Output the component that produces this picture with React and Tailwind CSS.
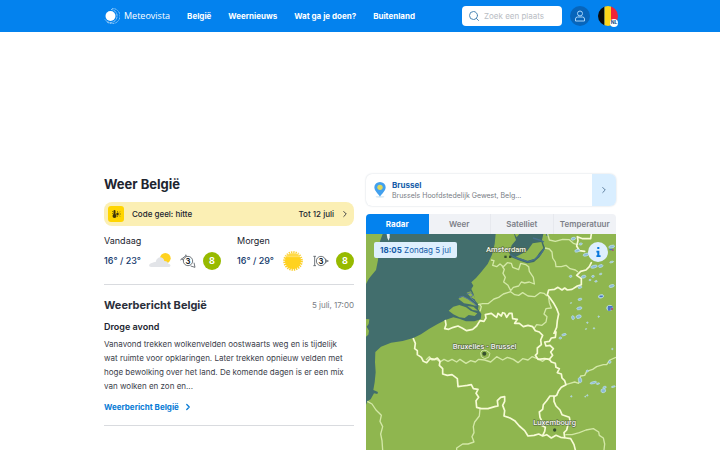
import React from "react";
import { ChevronRight, Search } from "lucide-react";

const navLinks = ["België", "Weernieuws", "Wat ga je doen?", "Buitenland"];
const tabs = ["Radar", "Weer", "Satelliet", "Temperatuur"];

const forecast = [
  { day: "Vandaag", temp: "16° / 23°", icon: "cloud", wind: 3, score: 8 },
  { day: "Morgen", temp: "16° / 29°", icon: "sun", wind: 3, score: 8 },
];

const Logo = () => (
  <svg viewBox="0 0 32 32" className="size-4" aria-hidden="true">
    <circle cx="13" cy="16" r="10" fill="#fff" />
    <path d="M14 3a13 13 0 0 1 4 25A13 13 0 0 1 2 23" fill="none" stroke="#d5ecfe" strokeWidth="2" strokeDasharray="1.8 1.2" />
    <path d="M16 1a15 15 0 0 1 2 30A15 15 0 0 1 5 27" fill="none" stroke="#b5dcfc" strokeWidth="2" strokeDasharray="1.8 1.4" />
  </svg>
);

const UserIcon = () => (
  <svg viewBox="0 0 24 24" className="size-3" fill="none" stroke="#a9d5fa" strokeWidth="2" aria-hidden="true">
    <circle cx="12" cy="7" r="5" />
    <path d="M7 14h10a4 4 0 0 1 4 4v4H3v-4a4 4 0 0 1 4-4z" strokeLinejoin="round" />
  </svg>
);

const BelgianFlag = () => (
  <svg viewBox="0 0 40 40" className="size-5" aria-hidden="true">
    <clipPath id="flag">
      <circle cx="20" cy="20" r="20" />
    </clipPath>
    <g clipPath="url(#flag)">
      <path d="M0 0h13v40H0z" fill="#0a0a0a" />
      <path d="M13 0h13v40H13z" fill="#fdd51a" />
      <path d="M26 0h14v40H26z" fill="#ef2437" />
    </g>
  </svg>
);

const HeatIcon = () => (
  <svg viewBox="0 0 32 32" className="size-4" aria-hidden="true">
    <rect width="32" height="32" rx="6" fill="#ffd500" />
    <path d="M13 10v8" stroke="#3d330a" strokeWidth="4" strokeLinecap="round" />
    <circle cx="13" cy="20" r="4" fill="#3d330a" />
    <circle cx="19" cy="16" r="2.5" fill="#3d330a" />
    <path d="M19 10v3M19 19v3M23 16h3M22 13l2-2M22 19l2 2M8 11h2M8 15h2" stroke="#6f5c0c" strokeWidth="1.5" />
  </svg>
);

const CloudIcon = () => (
  <svg viewBox="0 0 72 48" className="h-4 w-6" aria-hidden="true">
    <circle cx="52" cy="16" r="16" fill="#ffd21f" />
    <path d="M10 42C1 42 1 32 12 30c4-3 8-3 11-3C27 9 46 9 49 24c7 0 11 4 12 8 9 1 8 10 1 10z" fill="#e2e4e8" />
  </svg>
);

const SunIcon = () => (
  <svg viewBox="0 0 60 60" className="size-5" aria-hidden="true">
    <circle cx="30" cy="30" r="25" fill="none" stroke="#fbcf2b" strokeWidth="9" strokeDasharray="4 2.54" />
    <circle cx="30" cy="30" r="24" fill="#ffd21f" />
    <path d="M3 7h54M3 12h54M3 17h54" stroke="#fff" strokeWidth="2" opacity=".55" />
  </svg>
);

const WindIcon = ({ day, value }) => (
  <svg viewBox="0 0 48 42" className="h-3.5 w-4" role="img" aria-label={`Wind ${value}`}>
    <g fill="none" stroke="#565b63" strokeWidth="2.5">
      {day === "Vandaag" ? (
        <path d="M1 18L19 4M4 15l8 4M17 2l3 8M32 36l13 4-3-14" />
      ) : (
        <path d="M1 7h8M5 7v28M1 35h8M36 15l8 6-8 6M38 21h9" />
      )}
      <circle cx="24" cy="21" r="14" fill="#fff" />
    </g>
    <text x="24" y="29" textAnchor="middle" className="fill-[#20242c] text-[23px] font-bold">
      {value}
    </text>
  </svg>
);

const PinIcon = () => (
  <svg viewBox="0 0 36 48" className="h-4 w-3 shrink-0" aria-hidden="true">
    <ellipse cx="18" cy="44" rx="13" ry="3" fill="#dcebf5" />
    <path d="M18 44C13 36 1 27 1 16a17 16 0 0 1 34 0c0 11-12 20-17 28z" fill="#42a0ee" />
    <circle cx="18" cy="16" r="8" fill="#ded75a" />
  </svg>
);

const radarEchoes = [
  [622, 14, 7, 4], [634, 50, 8, 4], [644, 30, 5, 3], [660, 62, 9, 4], [737, 38, 9, 4],
  [684, 98, 10, 4], [704, 96, 7, 4], [737, 84, 6, 2], [614, 127, 4, 3], [653, 128, 7, 4],
  [681, 127, 4, 3], [704, 120, 4, 2], [690, 142, 4, 2], [672, 138, 3, 2], [642, 160, 6, 3],
  [737, 156, 8, 4], [705, 187, 8, 5], [642, 196, 6, 3], [731, 222, 9, 8], [640, 223, 8, 4],
  [621, 251, 4, 6], [638, 248, 8, 5], [615, 207, 2, 1], [698, 248, 2, 2], [684, 283, 2, 2],
  [664, 266, 2, 2], [660, 285, 2, 1], [594, 302, 7, 3], [583, 312, 4, 3], [642, 438, 5, 8],
  [664, 411, 3, 3], [682, 446, 10, 3], [696, 449, 5, 2], [712, 470, 7, 6], [742, 458, 6, 2],
  [716, 460, 5, 3], [731, 384, 4, 4], [739, 345, 2, 2], [616, 487, 2, 2], [664, 484, 2, 2],
  [658, 488, 2, 1],
];

const RadarMap = () => (
  <svg viewBox="0 0 750 648" className="block w-full" role="img" aria-label="Radarkaart van België">
    <rect width="750" height="648" fill="#8fb64f" />

    {/* sea */}
    <path
      d="M0 0H389L386 30L378 62L365 90L345 115L330 132L316 145L322 155L316 165L322 178L328 200L338 212L336 225L346 240L344 256L325 262L300 262L280 254L262 250L240 257L215 270L190 284L165 301L142 312L110 321L75 326L45 338L28 354L27 385L29 415L26 445L22 468L36 474L34 480L24 478L14 496L4 502L0 512Z"
      fill="#426e6d"
    />
    <path
      d="M0 0H50L42 22L38 45L36 78L30 108L15 126L8 135L0 150ZM0 255L10 256L8 270L2 278L9 290L7 302L0 308Z"
      fill="#8fb64f"
    />
    <path d="M62 0L64 12L68 20L71 10V0Z" fill="#e7eef3" />

    {/* Zeeland */}
    <g fill="#8fb64f">
      <path d="M248 230L262 218L280 213L300 220L314 230L334 238L326 246L308 243L296 252L280 250L262 241Z" />
      <path d="M277 194L292 187L306 196L324 208L330 216L312 211L294 208Z" />
      <path d="M302 176L314 172L324 186L330 198L314 190Z" />
      <path d="M304 216L322 218L336 230L320 228Z" />
    </g>
    <path
      d="M279 190L290 187L305 194L322 206L332 215M302 180L314 176L322 184L312 190L328 204"
      fill="none"
      stroke="#5877a0"
      strokeWidth="3"
    />

    {/* IJsselmeer and Waddenzee */}
    <path
      d="M444 0L450 18L437 34L430 58L436 70L458 79L484 88L504 84L520 70L532 52L537 42L528 18L532 0Z"
      fill="#3f6a69"
    />
    <path d="M446 0L460 0L452 10ZM450 68L470 58L484 50L500 28L526 24L532 42L520 56L508 74L484 80Z" fill="#8fb64f" />
    <path d="M432 62L450 72L470 78L486 84L506 76L524 60L535 44M501 12L520 18L534 24M540 2L548 6" fill="none" stroke="#46708a" strokeWidth="4" />

    {/* provinces and regions */}
    <g fill="none" stroke="#d3e8a7" strokeWidth="4" strokeLinejoin="round">
      <path d="M375 78L384 80L380 94L392 98L402 90L412 98L424 86L436 88L440 100L458 107L464 88L480 92L488 98L490 112L502 130L505 150L490 144L476 147L466 144L458 156L442 160L434 170L426 154L413 144L418 130L411 118L415 106L408 96" />
      <path d="M336 212L350 209L366 209L384 195L398 190L412 180L434 173L446 182L458 184L470 176L486 186L506 188L522 176L534 178L543 186" />
      <path d="M537 42L550 45L558 54L560 72L568 84L570 98L586 98L600 94L612 104L628 108L636 114" />
      <path d="M545 0L550 18L568 22L590 16L610 17L622 28L634 32" />
      <path d="M548 190L550 206L556 222L540 224L534 240L543 248L540 264L528 274L512 272L504 284" />
      <path d="M342 232L346 218L340 210" />
      <path d="M180 378L190 368L198 378L212 376L222 384L234 376L246 382L258 376L272 384L282 376L300 388L314 380L328 384L338 376L356 378L374 384L392 368L410 378L424 370L442 376L456 386L470 374L486 378L498 368L514 374L530 382L540 374L552 378" />
      <path d="M4 502L18 510L30 528L46 544L42 562L50 578L44 600L48 620L50 648M342 524L340 546L326 564L322 578L324 596L318 608L324 624L306 630L290 630L272 642V648" />
      <path d="M600 452L612 448L626 444L638 448L644 426L656 424L662 412L680 406L692 398L712 392L722 392L732 378L750 370" />
      <path d="M598 602L618 602L640 596L660 588L682 584L698 594L700 604L712 612L716 630L714 648" />
    </g>

    {/* national borders */}
    <g fill="none" stroke="#f7fbd6" strokeWidth="5" strokeLinejoin="round" strokeLinecap="round">
      <path d="M142 314L148 328L146 344L154 350L154 362L166 370L172 382L182 386L192 374L206 376L214 372L222 382L220 394L230 404L230 420L244 424L258 422L274 434L276 458L290 456L304 454L316 452L322 464L336 466L330 478L338 490L330 500L332 520L346 524L366 524L386 518L396 516L394 500L404 490L416 488L416 502L410 514L416 530L414 546L432 552L446 560L460 576L476 590L486 606L504 604L518 600L530 606L542 602L556 612L570 604L584 610L600 612L614 614L624 632L628 648" />
      <path d="M238 260L240 272L236 284L248 286L262 280L276 276L288 282L302 290L320 286L332 276L342 260L354 262L360 252L358 242L376 238L386 246L392 250L396 238L406 246L410 236L416 238L422 250L430 238L438 238L440 254L454 256L446 268L460 268L472 278L486 274L500 278L508 290L520 294L530 304L524 318L526 332L514 342L514 358L508 364L516 376L536 374L550 376L556 384L568 388L570 400L580 404L574 416L586 420L588 432L596 440L600 452L586 460L578 470L572 484L564 488" />
      <path d="M676 0L674 14L650 14L634 8L636 20L632 36L640 50L656 52M676 86L670 98L660 108L644 112L632 124L646 134L646 152L634 156L618 166L604 168L596 162L588 168L576 160L566 166L548 168L544 182L552 192L562 206L572 224L578 240L574 260L572 280L564 298L570 294L568 310L556 312L550 322L536 324L540 336L552 334L562 344L554 354L560 364L550 376" />
      <path d="M564 488L564 502L570 516L582 528L588 542L610 550L612 560L606 572L602 588L594 596L596 610" />
      <path d="M564 486L552 486L542 500L532 512L530 526L520 534L522 550L528 562L526 574L538 580L536 592L530 604" />
    </g>

    <g stroke="#c3e2ef" strokeWidth="2">
      {radarEchoes.map(([x, y, rx, ry]) => (
        <ellipse key={`${x}-${y}`} cx={x} cy={y} rx={rx} ry={ry} fill="#8cbbd4" transform={`rotate(-14 ${x} ${y})`} />
      ))}
    </g>
    <path d="M726 216h14v5h-6v9h-8zM730 44h10v5h-10zM701 185h9v4h-9z" fill="#4b72c4" />
    <path d="M735 222h6v6h-6zM738 46h5v5h-5z" fill="#a8577f" />

    <g fill="#35502d">
      <rect x="415" y="65" width="7" height="7" />
      <rect x="429" y="65" width="7" height="7" />
      <path d="M344 356L350 348L362 350L372 358L368 370L356 374L346 368Z" fill="none" stroke="#d3e8a7" strokeWidth="3" />
      <circle cx="355" cy="359" r="6" />
      <circle cx="566" cy="588" r="5" />
    </g>
    <g
      className="fill-[#f4f6ee] stroke-[#4e5d3c] font-[Roboto,sans-serif] text-[23px] font-medium"
      strokeWidth="3"
      paintOrder="stroke"
      textAnchor="middle"
    >
      <text x="420" y="54">Amsterdam</text>
      <text x="356" y="345">Bruxelles - Brussel</text>
      <text x="566" y="574">Luxembourg</text>
    </g>
  </svg>
);

const Header = () => (
  <header className="bg-[#0382ee] px-4 text-white">
    <div className="mx-auto flex h-8 max-w-[512px] items-center">
      <a href="#" className="flex items-center gap-1 font-['Open_Sans',sans-serif] text-[9px]">
        <Logo />
        Meteovista
      </a>
      <nav className="ml-[17px] flex gap-[17px] text-[8px] font-bold whitespace-nowrap">
        {navLinks.map((link) => (
          <a key={link} href="#">
            {link}
          </a>
        ))}
      </nav>
      <div className="-mr-0.5 ml-auto flex items-center gap-2">
        <label className="flex h-5 w-[100px] items-center gap-1 rounded bg-white px-1.5">
          <Search className="size-3 shrink-0 text-[#4c87b5]" strokeWidth={2} />
          <input
            type="search"
            aria-label="Zoek een plaats"
            placeholder="Zoek een plaats"
            className="w-full min-w-0 text-[8px] text-gray-800 outline-none placeholder:text-[#b9bdc4]"
          />
        </label>
        <button aria-label="Account" className="flex size-5 items-center justify-center rounded-full bg-[#0765bb]">
          <UserIcon />
        </button>
        <button aria-label="Taal" className="relative">
          <BelgianFlag />
          <span className="absolute right-0 -bottom-px flex size-2 items-center justify-center rounded-full bg-white text-[5px] font-bold text-[#164a88]">
            NL
          </span>
        </button>
      </div>
    </div>
  </header>
);

const Forecast = () => (
  <section className="mt-2 grid grid-cols-2 gap-4 border-b border-[#d9dbdf] pb-[11px]">
    {forecast.map(({ day, temp, icon, wind, score }) => (
      <div key={day}>
        <h2 className="text-[9px] leading-3.5">{day}</h2>
        <div className="mt-px flex h-6 items-center justify-between">
          <span className="text-[9px] font-medium whitespace-nowrap text-[#12386b]">{temp}</span>
          <span className="flex w-6 justify-center">{icon === "sun" ? <SunIcon /> : <CloudIcon />}</span>
          <WindIcon day={day} value={wind} />
          <span className="flex size-[18px] items-center justify-center rounded-full bg-[#97ba00] text-[9px] font-bold text-white">
            {score}
          </span>
        </div>
      </div>
    ))}
  </section>
);

const Report = () => (
  <section className="border-b border-[#d9dbdf] pt-3 pb-3">
    <div className="flex items-center justify-between">
      <h2 className="text-[11px] leading-4 font-bold text-[#2b2f3b]">Weerbericht België</h2>
      <time className="text-[8px] text-[#797d84]">5 juli, 17:00</time>
    </div>
    <h3 className="mt-1.5 text-[9px] leading-4 font-semibold">Droge avond</h3>
    <p className="mt-0.5 pr-1 text-[8px] leading-3.5 text-[#3b404a]">
      Vanavond trekken wolkenvelden oostwaarts weg en is tijdelijk wat ruimte voor opklaringen. Later trekken opnieuw
      velden met hoge bewolking over het land. De komende dagen is er een mix van wolken en zon en...
    </p>
    <a href="#" className="mt-2 flex items-center gap-1 text-[8px] leading-3 font-bold text-[#087bd5]">
      Weerbericht België
      <ChevronRight className="size-2.5" strokeWidth={3} />
    </a>
  </section>
);

const RadarPanel = () => (
  <section className="mt-2 overflow-hidden rounded-t">
    <div role="tablist" className="grid h-5 grid-cols-4 bg-[#f0f2f6] text-[8px] font-semibold text-[#7c8088]">
      {tabs.map((tab, i) => (
        <button
          key={tab}
          role="tab"
          aria-selected={i === 0}
          className={i === 0 ? "bg-[#0382ee] font-bold text-white" : "border-r border-[#e7e9ee] last:border-r-0"}
        >
          {tab}
        </button>
      ))}
    </div>
    <div className="relative">
      <RadarMap />
      <span className="absolute top-2 left-2 rounded-xs bg-[#deeffe] px-1.5 text-[8px] leading-4 text-[#145ba9]">
        <b>18:05</b> Zondag 5 jul
      </span>
      <button
        aria-label="Informatie"
        className="absolute top-2 right-2 flex size-5 items-center justify-center rounded-full bg-[#deeffe]"
      >
        <svg viewBox="0 0 12 24" className="h-2.5" aria-hidden="true">
          <path d="M3 0h5v5H3zM1 9h7v11h3v4H1v-4h2v-7H1z" fill="#0878dc" />
        </svg>
      </button>
    </div>
  </section>
);

export default function App() {
  return (
    <div className="bg-white font-[Inter,sans-serif] text-[#20242f]">
      <Header />
      <main className="px-4">
        <div className="mx-auto grid max-w-[512px] grid-cols-2 gap-3 pt-[142px]">
          <div className="min-w-0">
            <h1 className="text-[13px] leading-5 font-bold">Weer België</h1>
            <a href="#" className="mt-2 flex h-6 items-center rounded-lg bg-[#fbefb4] px-1 text-[8px] font-medium">
              <HeatIcon />
              <span className="ml-2">Code geel: hitte</span>
              <span className="mr-1.5 ml-auto">Tot 12 juli</span>
              <ChevronRight className="size-2.5" strokeWidth={2} />
            </a>
            <Forecast />
            <Report />
          </div>
          <div className="min-w-0">
            <a href="#" className="flex h-8 items-center overflow-hidden rounded-md pl-2 shadow-[0_0_2px_#cbd2da]">
              <PinIcon />
              <span className="ml-1.5 min-w-0 flex-1">
                <span className="block text-[8px] leading-3 font-bold text-[#145ba9]">Brussel</span>
                <span className="block text-[7px] leading-2.5 text-[#777c84]">Brussels Hoofdstedelijk Gewest, Belg...</span>
              </span>
              <span className="flex h-full w-6 items-center justify-center bg-[#d9eeff] text-[#44698c]">
                <ChevronRight className="size-2.5" strokeWidth={2} />
              </span>
            </a>
            <RadarPanel />
          </div>
        </div>
      </main>
    </div>
  );
}
